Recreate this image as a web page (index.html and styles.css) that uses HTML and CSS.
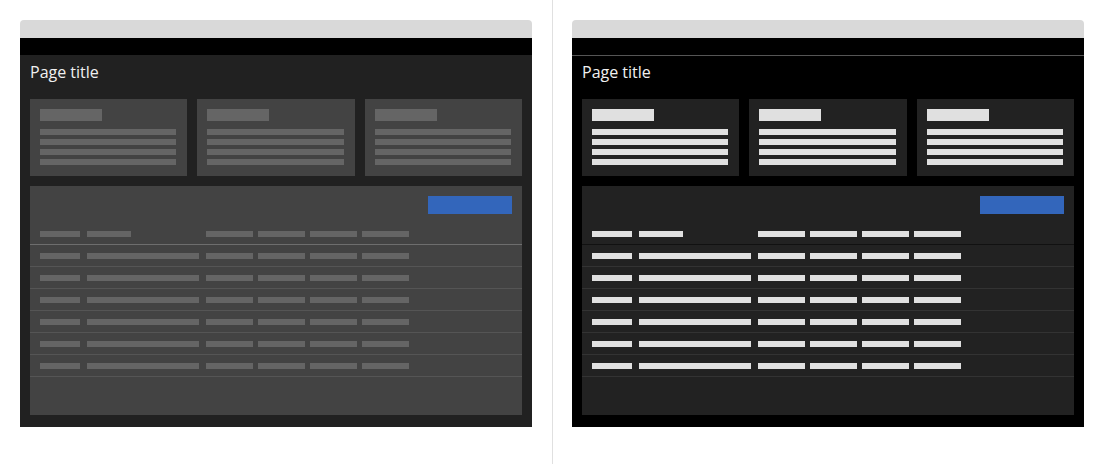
FILE: index.html
```html
<!DOCTYPE html>
<html lang="en">
<head>
    <meta charset="UTF-8">
    <title>Theme preview</title>
    <link rel="stylesheet" href="styles.css">
</head>
<body>
    <div class="compare">
        <div class="pane">
            <div class="window dim">
                <div class="chrome"></div>
                <div class="topbar"></div>
                <div class="content">
                    <h1 class="page-title">Page title</h1>
                    <div class="cards">
                        <div class="card"><span class="ph card-head"></span><span class="ph line"></span><span class="ph line"></span><span class="ph line"></span><span class="ph line"></span></div>
                        <div class="card"><span class="ph card-head"></span><span class="ph line"></span><span class="ph line"></span><span class="ph line"></span><span class="ph line"></span></div>
                        <div class="card"><span class="ph card-head"></span><span class="ph line"></span><span class="ph line"></span><span class="ph line"></span><span class="ph line"></span></div>
                    </div>
                    <div class="table-panel">
                        <div class="toolbar"><span class="btn"></span></div>
                        <div class="row head">
                            <span class="cell c1"><span class="ph"></span></span>
                            <span class="cell c2"><span class="ph short"></span></span>
                            <span class="cell c3"><span class="ph"></span></span>
                            <span class="cell c3"><span class="ph"></span></span>
                            <span class="cell c3"><span class="ph"></span></span>
                            <span class="cell c3"><span class="ph"></span></span>
                        </div>
                        <div class="row"><span class="cell c1"><span class="ph"></span></span><span class="cell c2"><span class="ph"></span></span><span class="cell c3"><span class="ph"></span></span><span class="cell c3"><span class="ph"></span></span><span class="cell c3"><span class="ph"></span></span><span class="cell c3"><span class="ph"></span></span></div>
                        <div class="row"><span class="cell c1"><span class="ph"></span></span><span class="cell c2"><span class="ph"></span></span><span class="cell c3"><span class="ph"></span></span><span class="cell c3"><span class="ph"></span></span><span class="cell c3"><span class="ph"></span></span><span class="cell c3"><span class="ph"></span></span></div>
                        <div class="row"><span class="cell c1"><span class="ph"></span></span><span class="cell c2"><span class="ph"></span></span><span class="cell c3"><span class="ph"></span></span><span class="cell c3"><span class="ph"></span></span><span class="cell c3"><span class="ph"></span></span><span class="cell c3"><span class="ph"></span></span></div>
                        <div class="row"><span class="cell c1"><span class="ph"></span></span><span class="cell c2"><span class="ph"></span></span><span class="cell c3"><span class="ph"></span></span><span class="cell c3"><span class="ph"></span></span><span class="cell c3"><span class="ph"></span></span><span class="cell c3"><span class="ph"></span></span></div>
                        <div class="row"><span class="cell c1"><span class="ph"></span></span><span class="cell c2"><span class="ph"></span></span><span class="cell c3"><span class="ph"></span></span><span class="cell c3"><span class="ph"></span></span><span class="cell c3"><span class="ph"></span></span><span class="cell c3"><span class="ph"></span></span></div>
                        <div class="row"><span class="cell c1"><span class="ph"></span></span><span class="cell c2"><span class="ph"></span></span><span class="cell c3"><span class="ph"></span></span><span class="cell c3"><span class="ph"></span></span><span class="cell c3"><span class="ph"></span></span><span class="cell c3"><span class="ph"></span></span></div>
                    </div>
                </div>
            </div>
        </div>

        <div class="pane pane-right">
            <div class="window dark">
                <div class="chrome"></div>
                <div class="topbar"></div>
                <div class="content">
                    <h1 class="page-title">Page title</h1>
                    <div class="cards">
                        <div class="card"><span class="ph card-head"></span><span class="ph line"></span><span class="ph line"></span><span class="ph line"></span><span class="ph line"></span></div>
                        <div class="card"><span class="ph card-head"></span><span class="ph line"></span><span class="ph line"></span><span class="ph line"></span><span class="ph line"></span></div>
                        <div class="card"><span class="ph card-head"></span><span class="ph line"></span><span class="ph line"></span><span class="ph line"></span><span class="ph line"></span></div>
                    </div>
                    <div class="table-panel">
                        <div class="toolbar"><span class="btn"></span></div>
                        <div class="row head">
                            <span class="cell c1"><span class="ph"></span></span>
                            <span class="cell c2"><span class="ph short"></span></span>
                            <span class="cell c3"><span class="ph"></span></span>
                            <span class="cell c3"><span class="ph"></span></span>
                            <span class="cell c3"><span class="ph"></span></span>
                            <span class="cell c3"><span class="ph"></span></span>
                        </div>
                        <div class="row"><span class="cell c1"><span class="ph"></span></span><span class="cell c2"><span class="ph"></span></span><span class="cell c3"><span class="ph"></span></span><span class="cell c3"><span class="ph"></span></span><span class="cell c3"><span class="ph"></span></span><span class="cell c3"><span class="ph"></span></span></div>
                        <div class="row"><span class="cell c1"><span class="ph"></span></span><span class="cell c2"><span class="ph"></span></span><span class="cell c3"><span class="ph"></span></span><span class="cell c3"><span class="ph"></span></span><span class="cell c3"><span class="ph"></span></span><span class="cell c3"><span class="ph"></span></span></div>
                        <div class="row"><span class="cell c1"><span class="ph"></span></span><span class="cell c2"><span class="ph"></span></span><span class="cell c3"><span class="ph"></span></span><span class="cell c3"><span class="ph"></span></span><span class="cell c3"><span class="ph"></span></span><span class="cell c3"><span class="ph"></span></span></div>
                        <div class="row"><span class="cell c1"><span class="ph"></span></span><span class="cell c2"><span class="ph"></span></span><span class="cell c3"><span class="ph"></span></span><span class="cell c3"><span class="ph"></span></span><span class="cell c3"><span class="ph"></span></span><span class="cell c3"><span class="ph"></span></span></div>
                        <div class="row"><span class="cell c1"><span class="ph"></span></span><span class="cell c2"><span class="ph"></span></span><span class="cell c3"><span class="ph"></span></span><span class="cell c3"><span class="ph"></span></span><span class="cell c3"><span class="ph"></span></span><span class="cell c3"><span class="ph"></span></span></div>
                        <div class="row"><span class="cell c1"><span class="ph"></span></span><span class="cell c2"><span class="ph"></span></span><span class="cell c3"><span class="ph"></span></span><span class="cell c3"><span class="ph"></span></span><span class="cell c3"><span class="ph"></span></span><span class="cell c3"><span class="ph"></span></span></div>
                    </div>
                </div>
            </div>
        </div>
    </div>
</body>
</html>
```

FILE: styles.css
```css
body {
    margin: 0;
    background-color: #fff;
    font-family: 'Open Sans', sans-serif;
}

.compare {
    display: flex;
    height: 464px;
}

.pane {
    width: 512px;
    padding: 20px 20px 0 20px;
}

.pane-right {
    padding-left: 19px;
    border-left: 1px solid #e0e0e0;
}

.window {
    display: flex;
    flex-direction: column;
    height: 407px;
}

.chrome {
    height: 18px;
    background-color: #d9d9d9;
    border-radius: 4px 4px 0 0;
}

.topbar {
    height: 17px;
    background-color: #000;
}

.content {
    flex: 1;
    display: flex;
    flex-direction: column;
    padding: 6px 10px 12px 10px;
}

.page-title {
    margin: 0;
    padding-bottom: 16px;
    font-size: 16px;
    font-weight: normal;
    line-height: 22px;
    color: #f0f0f0;
}

.cards {
    display: flex;
    gap: 10px;
}

.card {
    flex: 1;
    height: 77px;
    box-sizing: border-box;
    padding: 10px 11px 11px 10px;
    display: flex;
    flex-direction: column;
    gap: 4px;
}

.ph {
    display: block;
    height: 6px;
}

.card-head {
    width: 62px;
    height: 12px;
    margin-bottom: 4px;
}

.table-panel {
    flex: 1;
    margin-top: 10px;
}

.toolbar {
    display: flex;
    justify-content: flex-end;
    padding: 10px 10px 0 0;
    margin-bottom: 10px;
}

.btn {
    width: 84px;
    height: 18px;
    background-color: #3366bb;
}

.row {
    display: flex;
    padding: 8px 0 7px 10px;
    border-bottom: 1px solid;
}

.row.head {
    padding-top: 7px;
}

.cell {
    display: block;
}

.c1 {
    width: 40px;
    margin-right: 7px;
}

.c2 {
    width: 112px;
    margin-right: 7px;
}

.c3 {
    width: 47px;
    margin-right: 5px;
}

.ph.short {
    width: 44px;
}

/* dim theme */
.dim .content {
    background-color: #212121;
}

.dim .card,
.dim .table-panel {
    background-color: #434343;
}

.dim .ph {
    background-color: #656565;
}

.dim .row {
    border-bottom-color: #555;
}

.dim .row.head {
    border-bottom-color: #6e6e6e;
}

/* dark theme */
.dark .content {
    background-color: #000;
    border-top: 1px solid #555;
    padding-top: 5px;
}

.dark .card,
.dark .table-panel {
    background-color: #222;
}

.dark .ph {
    background-color: #e0e0e0;
}

.dark .row {
    border-bottom-color: #333;
}

.dark .row.head {
    border-bottom-color: #111;
}
```
